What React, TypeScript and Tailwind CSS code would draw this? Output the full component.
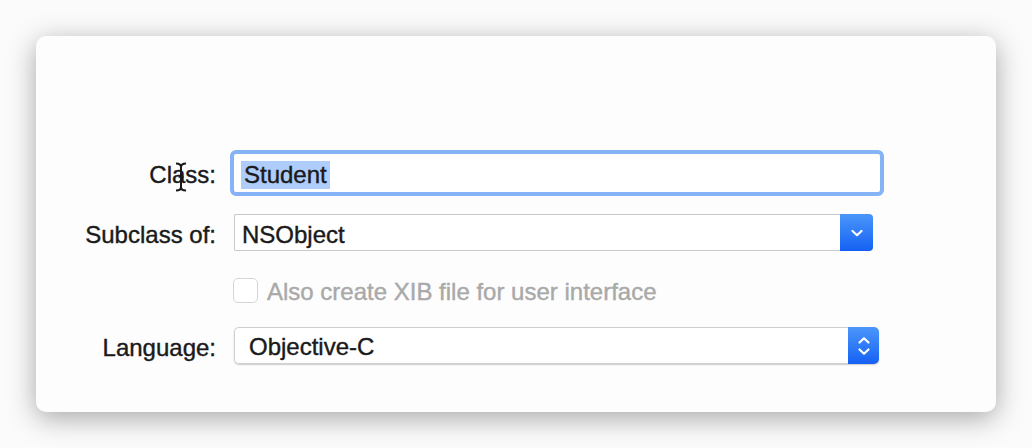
import React from "react";

const font = { fontFamily: '"Liberation Sans", Arial, Helvetica, sans-serif' };

function ChevronDown() {
  return (
    <svg width="14" height="10" viewBox="0 0 14 10" fill="none">
      <path d="M2.5 3 L7 7.2 L11.5 3" stroke="white" strokeWidth="2.2" strokeLinecap="round" strokeLinejoin="round" />
    </svg>
  );
}

function Stepper() {
  return (
    <svg width="14" height="24" viewBox="0 0 14 24" fill="none">
      <path d="M2.5 8.5 L7 4.3 L11.5 8.5" stroke="white" strokeWidth="2.2" strokeLinecap="round" strokeLinejoin="round" />
      <path d="M2.5 15.5 L7 19.7 L11.5 15.5" stroke="white" strokeWidth="2.2" strokeLinecap="round" strokeLinejoin="round" />
    </svg>
  );
}

function IBeam() {
  return (
    <svg width="14" height="30" viewBox="0 0 14 30" fill="none" className="absolute left-[25px] top-[5px] w-[14px] h-[30px]">
      <path d="M2 1.5 Q7 1.5 7 5 L7 25 Q7 28.5 2 28.5" stroke="#1a1a1a" strokeWidth="2" fill="none" />
      <path d="M12 1.5 Q7 1.5 7 5 L7 25 Q7 28.5 12 28.5" stroke="#1a1a1a" strokeWidth="2" fill="none" />
      <path d="M4.5 15 L9.5 15" stroke="#1a1a1a" strokeWidth="1.6" />
    </svg>
  );
}

export default function App() {
  return (
    <div className="w-[1032px] h-[448px] bg-[#fbfbfb] pt-[36px] pl-[36px] overflow-hidden" style={font}>
      <div className="w-[960px] h-[376px] bg-[#fdfdfd] rounded-[10px] shadow-[0_6px_28px_rgba(0,0,0,0.34)] pt-[114px] flex flex-col text-[24px] text-[#1a1a1a] [-webkit-text-stroke:0.4px_currentColor]">
        {/* Class row */}
        <div className="flex items-center h-[46px]">
          <div className="w-[180px] text-right pt-[4px]">
            <span className="relative inline-block">
              Class:
              <IBeam />
            </span>
          </div>
          <div className="ml-[14px] w-[654px] h-[46px] rounded-[6px] border-[4px] border-[#86b3f6] bg-white flex items-center pl-[7px] pt-[3px]">
            <span className="bg-[#aecdfa] px-[3px] leading-[28px]">Student</span>
          </div>
        </div>

        {/* Subclass row */}
        <div className="flex items-center h-[37px] mt-[18px]">
          <div className="w-[180px] text-right pt-[4px]">Subclass of:</div>
          <div className="ml-[18px] w-[639px] h-[37px] flex">
            <div className="flex-1 border border-[#c9c9c9] border-r-0 rounded-l-[2px] bg-white flex items-center pl-[7px] pt-[4px]">
              NSObject
            </div>
            <div className="w-[33px] rounded-r-[4px] bg-gradient-to-b from-[#4b96fa] to-[#1560f3] flex items-center justify-center">
              <ChevronDown />
            </div>
          </div>
        </div>

        {/* Checkbox row */}
        <div className="flex items-center h-[25px] mt-[27px]">
          <div className="w-[180px]" />
          <div className="ml-[17px] w-[25px] h-[25px] rounded-[5px] border border-[#d6d6d6] bg-white" />
          <div className="ml-[9px] text-[#a9a9a9] pt-[2px]">Also create XIB file for user interface</div>
        </div>

        {/* Language row */}
        <div className="flex items-center h-[37px] mt-[24px]">
          <div className="w-[180px] text-right pt-[4px]">Language:</div>
          <div className="ml-[18px] w-[645px] h-[37px] flex rounded-[5px] shadow-[0_1px_1.5px_rgba(0,0,0,0.2)]">
            <div className="flex-1 border border-[#cfcfcf] border-r-0 rounded-l-[5px] bg-white flex items-center pl-[14px] pt-[3px]">
              Objective-C
            </div>
            <div className="w-[31px] rounded-r-[5px] bg-gradient-to-b from-[#4b96fa] to-[#1560f3] flex items-center justify-center">
              <Stepper />
            </div>
          </div>
        </div>
      </div>
    </div>
  );
}
